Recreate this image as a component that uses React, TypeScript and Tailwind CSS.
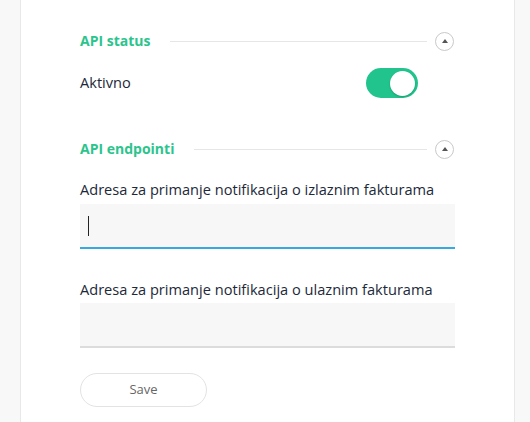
import React from 'react';

const SectionHeader: React.FC<{ title: string }> = ({ title }) => (
  <div className="flex h-5 items-center">
    <span className="text-[14px] font-bold text-[#2cc48d] leading-5">{title}</span>
    <div className="ml-5 mr-2 h-px flex-1 bg-[#e6e6e6]" />
    <button className="mr-[1px] flex h-[19px] w-[19px] items-center justify-center rounded-full border-[1.5px] border-[#c9c9c9]">
      <span className="block h-0 w-0 border-x-[3px] border-b-[4px] border-x-transparent border-b-[#555]" />
    </button>
  </div>
);

export default function App() {
  return (
    <div className="min-h-[422px] bg-[#f8f8f8] pl-5 pr-[15px] font-['Open_Sans',sans-serif]">
      <div className="min-h-[422px] border-x border-[#e8e8e8] bg-white pl-[59px] pr-[59px] pt-[31px]">
        <SectionHeader title="API status" />
        <div className="mt-[17px] flex h-[30px] items-center justify-between">
          <span className="text-[14.6px] text-[#1d2939]">Aktivno</span>
          <div className="mr-[37px] flex h-[30px] w-[52px] items-center justify-end rounded-full bg-[#21c48d] pr-[3px]">
            <div className="h-[25px] w-[25px] rounded-full bg-white shadow-[0_1px_2px_rgba(0,0,0,0.2)]" />
          </div>
        </div>

        <div className="mt-[41px]">
          <SectionHeader title="API endpointi" />
        </div>

        <div className="mt-5 text-[14.6px] leading-5 text-[#1d2939]">
          Adresa za primanje notifikacija o izlaznim fakturama
        </div>
        <div className="mt-[5px] flex h-[45px] items-center border-b-2 border-[#36a9e1] bg-[#f7f7f7] pl-[8px]">
          <span className="block h-[20px] w-px bg-[#222]" />
        </div>

        <div className="mt-[30px] text-[14.6px] leading-5 text-[#1d2939]">
          Adresa za primanje notifikacija o ulaznim fakturama
        </div>
        <div className="mt-[4px] h-[45px] border-b-2 border-[#dcdcdc] bg-[#f7f7f7]" />

        <button className="mt-[25px] h-[34px] w-[127px] rounded-full border border-[#e3e3e3] bg-white text-[13px] text-[#666]">
          Save
        </button>
      </div>
    </div>
  );
}
